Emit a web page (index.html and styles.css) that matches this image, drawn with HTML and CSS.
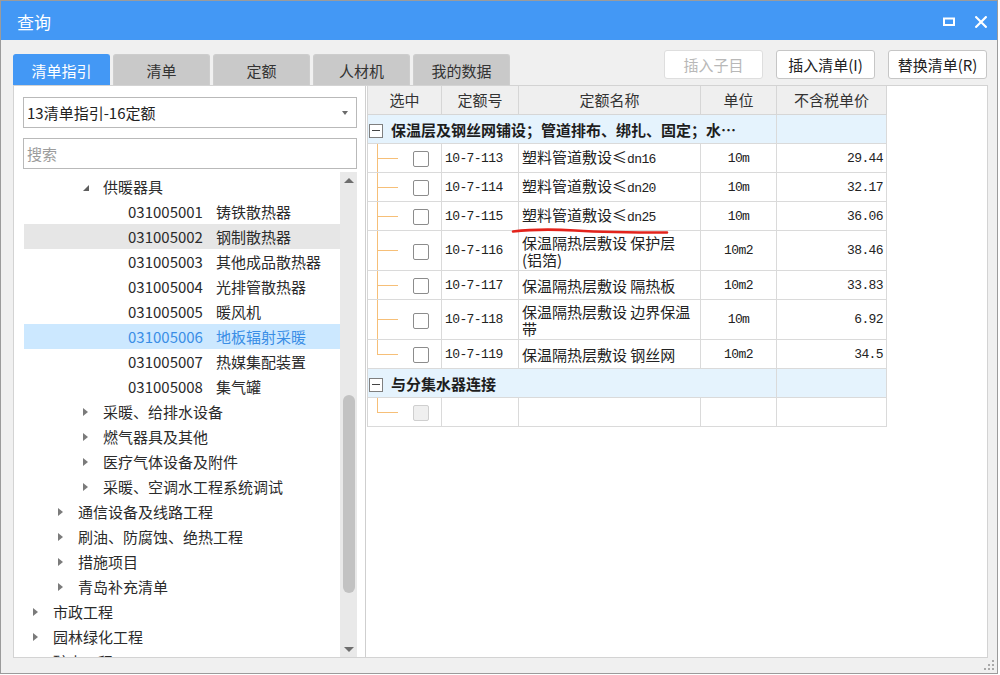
FILE: index.html
```html
<!DOCTYPE html>
<html lang="zh-CN">
<head>
<meta charset="utf-8">
<title>查询</title>
<link rel="stylesheet" href="styles.css">
</head>
<body>
<div class="window">
  <div class="titlebar">
    <span class="title">查询</span>
    <div class="win-ctrls">
      <svg width="12" height="10" viewBox="0 0 12 10"><rect x="1" y="1.5" width="10" height="6.5" fill="none" stroke="#fff" stroke-width="2"/></svg>
      <svg width="12" height="12" viewBox="0 0 12 12"><path d="M1.2 1.2L10.8 10.8M10.8 1.2L1.2 10.8" stroke="#fff" stroke-width="2.2" stroke-linecap="square"/></svg>
    </div>
  </div>
  <div class="toolbar">
    <div class="tabs">
      <div class="tab active">清单指引</div>
      <div class="tab">清单</div>
      <div class="tab">定额</div>
      <div class="tab">人材机</div>
      <div class="tab">我的数据</div>
    </div>
    <div class="buttons">
      <div class="btn disabled">插入子目</div>
      <div class="btn">插入清单(I)</div>
      <div class="btn">替换清单(R)</div>
    </div>
  </div>
  <div class="content">
    <div class="left-panel">
      <div class="select"><span>13清单指引-16定额</span><span class="caret"></span></div>
      <div class="search">搜索</div>
      <div class="tree">
        <div class="tree-list">
          <div class="row l3"><span class="tw open"></span>供暖器具</div>
          <div class="row l4"><span class="code">031005001</span>铸铁散热器</div>
          <div class="row l4 hover"><span class="code">031005002</span>钢制散热器</div>
          <div class="row l4"><span class="code">031005003</span>其他成品散热器</div>
          <div class="row l4"><span class="code">031005004</span>光排管散热器</div>
          <div class="row l4"><span class="code">031005005</span>暖风机</div>
          <div class="row l4 selected"><span class="code">031005006</span>地板辐射采暖</div>
          <div class="row l4"><span class="code">031005007</span>热媒集配装置</div>
          <div class="row l4"><span class="code">031005008</span>集气罐</div>
          <div class="row l3"><span class="tw"></span>采暖、给排水设备</div>
          <div class="row l3"><span class="tw"></span>燃气器具及其他</div>
          <div class="row l3"><span class="tw"></span>医疗气体设备及附件</div>
          <div class="row l3"><span class="tw"></span>采暖、空调水工程系统调试</div>
          <div class="row l2"><span class="tw"></span>通信设备及线路工程</div>
          <div class="row l2"><span class="tw"></span>刷油、防腐蚀、绝热工程</div>
          <div class="row l2"><span class="tw"></span>措施项目</div>
          <div class="row l2"><span class="tw"></span>青岛补充清单</div>
          <div class="row l1"><span class="tw"></span>市政工程</div>
          <div class="row l1"><span class="tw"></span>园林绿化工程</div>
          <div class="row l1"><span class="tw"></span>矿山工程</div>
        </div>
        <div class="vscroll">
          <div class="arrow up"></div>
          <div class="thumb"></div>
          <div class="spacer"></div>
          <div class="arrow down"></div>
        </div>
      </div>
    </div>
    <div class="right-panel">
      <table class="grid">
        <colgroup><col class="c1"><col class="c2"><col class="c3"><col class="c4"><col class="c5"></colgroup>
        <thead>
          <tr><th>选中</th><th>定额号</th><th>定额名称</th><th>单位</th><th>不含税单价</th></tr>
        </thead>
        <tbody>
          <tr class="group"><td colspan="4"><span class="minus"></span>保温层及钢丝网铺设；管道排布、绑扎、固定；水⋯</td><td></td></tr>
          <tr><td class="sel"><span class="cb"></span></td><td class="mono">10-7-113</td><td class="name">塑料管道敷设≤<span class="m">dn16</span></td><td class="mono unit">10m</td><td class="mono price">29.44</td></tr>
          <tr><td class="sel"><span class="cb"></span></td><td class="mono">10-7-114</td><td class="name">塑料管道敷设≤<span class="m">dn20</span></td><td class="mono unit">10m</td><td class="mono price">32.17</td></tr>
          <tr><td class="sel"><span class="cb"></span></td><td class="mono">10-7-115</td><td class="name">塑料管道敷设≤<span class="m">dn25</span></td><td class="mono unit">10m</td><td class="mono price">36.06</td></tr>
          <tr class="tall"><td class="sel"><span class="cb"></span></td><td class="mono">10-7-116</td><td class="name">保温隔热层敷设 保护层<br>(铝箔)</td><td class="mono unit">10m2</td><td class="mono price">38.46</td></tr>
          <tr><td class="sel"><span class="cb"></span></td><td class="mono">10-7-117</td><td class="name">保温隔热层敷设 隔热板</td><td class="mono unit">10m2</td><td class="mono price">33.83</td></tr>
          <tr class="tall"><td class="sel"><span class="cb"></span></td><td class="mono">10-7-118</td><td class="name">保温隔热层敷设 边界保温<br>带</td><td class="mono unit">10m</td><td class="mono price">6.92</td></tr>
          <tr><td class="sel last"><span class="cb"></span></td><td class="mono">10-7-119</td><td class="name">保温隔热层敷设 钢丝网</td><td class="mono unit">10m2</td><td class="mono price">34.5</td></tr>
          <tr class="group"><td colspan="4"><span class="minus"></span>与分集水器连接</td><td></td></tr>
          <tr><td class="sel last"><span class="cb off"></span></td><td></td><td></td><td></td><td></td></tr>
        </tbody>
      </table>
    </div>
  </div>
  <div class="statusbar">
    <svg class="grip" width="12" height="12" viewBox="0 0 12 12">
      <rect x="9" y="1" width="2" height="2" fill="#a9a9a9"/>
      <rect x="5" y="5" width="2" height="2" fill="#a9a9a9"/><rect x="9" y="5" width="2" height="2" fill="#a9a9a9"/>
      <rect x="1" y="9" width="2" height="2" fill="#a9a9a9"/><rect x="5" y="9" width="2" height="2" fill="#a9a9a9"/><rect x="9" y="9" width="2" height="2" fill="#a9a9a9"/>
    </svg>
  </div>
  <svg class="annot" width="1000" height="675" viewBox="0 0 1000 675">
    <path d="M513 231.5 C 530 229.5, 550 229, 575 230.5 S 625 232.5, 667 232.5" fill="none" stroke="#e3231b" stroke-width="2.6" stroke-linecap="round"/>
  </svg>
</div>
</body>
</html>
```
FILE: styles.css
```css
html, body {
  margin: 0;
  padding: 0;
  background: #ffffff;
}

.window {
  position: relative;
  width: 998px;
  height: 674px;
  box-sizing: border-box;
  border: 1px solid #9b9b9b;
  background: #f0f0f0;
  display: flex;
  flex-direction: column;
  font-family: "Noto Sans CJK SC", "Noto Sans", sans-serif;
  color: #333;
}

/* title bar */
.titlebar {
  flex: none;
  height: 39px;
  box-sizing: border-box;
  background: #4398f5;
  display: flex;
  align-items: center;
  padding: 3px 10px 0 16px;
}
.title {
  flex: 1;
  color: #fff;
  font-size: 17px;
  line-height: 20px;
}
.win-ctrls {
  display: flex;
  align-items: center;
  gap: 20px;
}

/* toolbar */
.toolbar {
  flex: none;
  height: 45px;
  display: flex;
  justify-content: space-between;
  padding: 0 10px 0 12px;
}
.tabs {
  display: flex;
  gap: 3px;
  align-self: flex-end;
}
.tab {
  width: 97px;
  height: 31px;
  box-sizing: border-box;
  background: #c9c9c9;
  border: 1px solid #cdcdcd;
  border-bottom: none;
  border-radius: 3px 3px 0 0;
  display: flex;
  align-items: center;
  justify-content: center;
  font-size: 15px;
  color: #333;
}
.tab.active {
  background: #4398f5;
  border-color: #4398f5;
  color: #fff;
}
.buttons {
  display: flex;
  gap: 13px;
  padding-top: 10px;
}
.btn {
  width: 99px;
  height: 29px;
  box-sizing: border-box;
  background: #fff;
  border: 1px solid #c6c6c6;
  border-radius: 3px;
  display: flex;
  align-items: center;
  justify-content: center;
  font-size: 15px;
  color: #222;
}
.btn.disabled {
  color: #b8b8b8;
  border-color: #dedede;
}

/* content */
.content {
  flex: none;
  height: 573px;
  box-sizing: border-box;
  margin: 0 9px 0 12px;
  border: 1px solid #d3d3d3;
  background: #fff;
  display: flex;
}
.left-panel {
  flex: none;
  width: 352px;
  box-sizing: border-box;
  border-right: 1px solid #cfcfcf;
  padding: 11px 8px 0 9px;
  display: flex;
  flex-direction: column;
}
.select, .search {
  flex: none;
  height: 31px;
  box-sizing: border-box;
  border: 1px solid #b9b9b9;
  display: flex;
  align-items: center;
  font-size: 15px;
}
.select {
  justify-content: space-between;
  padding: 0 8px 0 3px;
  color: #222;
}
.caret {
  width: 0;
  height: 0;
  border-left: 3.5px solid transparent;
  border-right: 3.5px solid transparent;
  border-top: 4px solid #6b6b6b;
}
.search {
  margin-top: 10px;
  padding-left: 3px;
  color: #9c9c9c;
}
.tree {
  flex: 1;
  min-height: 0;
  margin: 3px 0 0 1px;
  display: flex;
}
.tree-list {
  flex: 1;
  overflow: hidden;
  padding-top: 2px;
}
.row {
  height: 25px;
  display: flex;
  align-items: center;
  font-size: 15px;
  color: #2b2b2b;
  white-space: nowrap;
}
.row.l1 { padding-left: 9px; }
.row.l2 { padding-left: 34px; }
.row.l3 { padding-left: 59px; }
.row.l4 { padding-left: 104px; }
.row.hover { background: #e6e6e6; }
.row.selected { background: #cce8ff; color: #3a8ee6; }
.code { margin-right: 13px; }
.tw {
  flex: none;
  width: 20px;
  height: 10px;
  display: flex;
  align-items: center;
}
.tw::before {
  content: "";
  width: 0;
  height: 0;
  border-top: 4px solid transparent;
  border-bottom: 4px solid transparent;
  border-left: 5px solid #7b7b7b;
}
.tw.open::before {
  border-top: none;
  border-left: 6px solid transparent;
  border-bottom: 6px solid #5e5e5e;
  margin-top: 2px;
}
.vscroll {
  flex: none;
  width: 17px;
  background: #e9e9e9;
  display: flex;
  flex-direction: column;
  align-items: center;
}
.arrow {
  flex: none;
  height: 16px;
  display: flex;
  align-items: center;
  justify-content: center;
}
.arrow::before {
  content: "";
  width: 0;
  height: 0;
  border-left: 5px solid transparent;
  border-right: 5px solid transparent;
}
.arrow.up::before { border-bottom: 5px solid #6e6e6e; margin-top: 1px; }
.arrow.down::before { border-top: 5px solid #6e6e6e; }
.thumb {
  flex: none;
  margin-top: 207px;
  width: 12px;
  height: 198px;
  border-radius: 6px;
  background: #c2c2c2;
}
.spacer { flex: 1; }

/* grid */
.right-panel {
  flex: 1;
  padding-left: 1px;
}
.grid {
  border-collapse: separate;
  border-spacing: 0;
  table-layout: fixed;
  width: 520px;
  font-size: 15px;
  color: #222;
  border-left: 1px solid #d6d6d6;
}
.c1 { width: 74px; }
.c2 { width: 77px; }
.c3 { width: 182px; }
.c4 { width: 76px; }
.c5 { width: 110px; }
.grid th {
  box-sizing: border-box;
  height: 29px;
  padding: 0;
  background: #efefef;
  border-right: 1px solid #d6d6d6;
  border-bottom: 1px solid #d6d6d6;
  font-weight: normal;
  color: #333;
  line-height: 18px;
}
.grid td {
  box-sizing: border-box;
  height: 29px;
  padding: 0 3px;
  border-right: 1px solid #dadada;
  border-bottom: 1px solid #dadada;
  vertical-align: middle;
  line-height: 17px;
  white-space: nowrap;
  overflow: hidden;
}
.grid tr.tall td { height: 40px; }
.grid tr.group td {
  background: #e5f3fd;
  font-weight: bold;
  color: #1e1e1e;
  padding-left: 1px;
}
.minus {
  display: inline-block;
  vertical-align: -2px;
  width: 14px;
  height: 14px;
  box-sizing: border-box;
  border: 1px solid #7f7f7f;
  background: #fff linear-gradient(#444, #444) center / 8px 1px no-repeat;
  margin-right: 8px;
}
.grid td.sel {
  padding: 0;
  background-color: #fff;
  background-image:
    linear-gradient(to right, transparent 9px, #f6bf78 9px, #f6bf78 10px, transparent 10px),
    linear-gradient(to bottom, transparent 14px, #f6bf78 14px, #f6bf78 15px, transparent 15px);
  background-repeat: no-repeat;
  background-position: 0 0, 9px 0;
  background-size: 100% 100%, 21px 100%;
}
.grid tr.tall td.sel {
  background-image:
    linear-gradient(to right, transparent 9px, #f6bf78 9px, #f6bf78 10px, transparent 10px),
    linear-gradient(to bottom, transparent 19px, #f6bf78 19px, #f6bf78 20px, transparent 20px);
}
.grid td.sel.last {
  background-size: 100% 15px, 21px 100%;
}
.cb {
  display: inline-block;
  vertical-align: middle;
  width: 16px;
  height: 16px;
  box-sizing: border-box;
  margin-left: 45px;
  border: 1px solid #8c8c8c;
  border-radius: 2px;
  background: #fff;
}
.cb.off {
  border-color: #cfcfcf;
  background: #efefef;
}
.mono, .m {
  font-family: "Liberation Mono", "DejaVu Sans Mono", monospace;
  font-size: 13px;
  letter-spacing: -0.6px;
}
.unit { text-align: center; }
.price { text-align: right; }

/* status bar */
.statusbar {
  flex: 1;
  display: flex;
  justify-content: flex-end;
  align-items: flex-end;
  padding: 0 2px 2px 0;
}

.annot {
  position: absolute;
  left: -1px;
  top: -1px;
  pointer-events: none;
}
```
